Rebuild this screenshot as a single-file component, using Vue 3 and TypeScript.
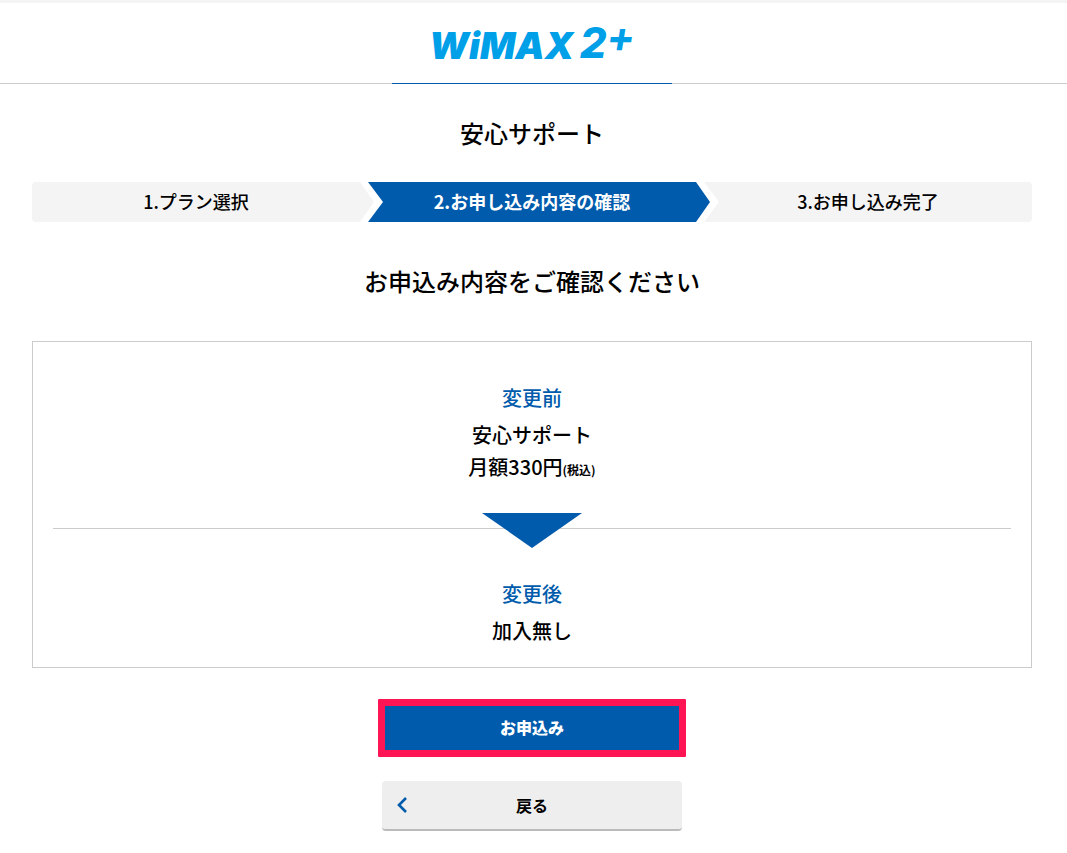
<script setup lang="ts">
interface Step {
  id: number
  label: string
}

const steps: Step[] = [
  { id: 1, label: '1.プラン選択' },
  { id: 2, label: '2.お申し込み内容の確認' },
  { id: 3, label: '3.お申し込み完了' },
]
const currentStep = 2
</script>

<template>
  <div class="page">
    <header class="header">
      <div class="brand" aria-label="WiMAX 2+">
        <span class="brand-name">WiMAX</span>
        <span class="brand-two">2</span>
        <span class="brand-plus">+</span>
      </div>
    </header>

    <main class="main">
      <h1 class="title">安心サポート</h1>

      <ol class="steps">
        <li
          v-for="step in steps"
          :key="step.id"
          class="step"
          :class="{ current: step.id === currentStep }"
          :aria-current="step.id === currentStep ? 'step' : undefined"
        >
          <span class="step-label">{{ step.label }}</span>
        </li>
      </ol>

      <h2 class="title subtitle">お申込み内容をご確認ください</h2>

      <section class="panel">
        <h3 class="label">変更前</h3>
        <p class="value">安心サポート</p>
        <p class="value">月額330円<small class="tax">(税込)</small></p>
        <div class="divider">
          <svg class="arrow" width="100" height="35" viewBox="0 0 100 35" aria-hidden="true">
            <path d="M0 0H100L50 35Z" fill="#005bac" />
          </svg>
        </div>
        <h3 class="label">変更後</h3>
        <p class="value">加入無し</p>
      </section>

      <div class="actions">
        <button type="button" class="apply">お申込み</button>
        <button type="button" class="back">
          <svg class="chevron" width="10" height="16" viewBox="0 0 10 16" aria-hidden="true">
            <path d="M9 1L2 8L9 15" fill="none" stroke="#005bac" stroke-width="2.6" />
          </svg>
          戻る
        </button>
      </div>
    </main>
  </div>
</template>

<style>
body {
  margin: 0;
  background: #fff;
}
</style>

<style scoped>
.page {
  font-family: "Noto Sans CJK JP", sans-serif;
  font-weight: 500;
  color: #000;
  border-top: 3px solid #f4f4f4;
}

.header {
  display: flex;
  justify-content: center;
  height: 80px;
  padding-right: 3px;
  border-bottom: 1px solid #ccc;
}

.brand {
  display: flex;
  justify-content: center;
  box-sizing: border-box;
  width: 280px;
  height: 81px;
  border-bottom: 1px solid #005bac;
  color: #00a0e9;
  font-family: Inter, "Liberation Sans", sans-serif;
  font-style: italic;
  font-weight: 900;
  white-space: nowrap;
}

.brand-name {
  font-size: 37px;
  line-height: 86px;
}

.brand-two {
  margin-left: 6px;
  font-size: 42px;
  font-weight: 800;
  line-height: 80px;
}

.brand-plus {
  font-size: 42px;
  font-weight: 700;
  line-height: 68px;
}

.main {
  max-width: 1000px;
  margin: 0 auto;
  padding: 32px 35px 22px 32px;
}

.title {
  margin: 0;
  font-size: 24px;
  font-weight: 500;
  line-height: 34px;
  text-align: center;
}

.steps {
  display: grid;
  grid-template-columns: repeat(3, 1fr);
  gap: 8px;
  margin: 32px 0 42px;
  padding: 0;
  list-style: none;
}

.step {
  position: relative;
  height: 40px;
  font-size: 18px;
  line-height: 38px;
  text-align: center;
}

.step::before {
  content: "";
  position: absolute;
  inset: 0 -14px 0 0;
  background: #f4f4f4;
  clip-path: polygon(0 0, calc(100% - 14px) 0, 100% 50%, calc(100% - 14px) 100%, 0 100%, 15px 50%);
}

.step:first-child::before {
  border-radius: 4px 0 0 4px;
  clip-path: polygon(0 0, calc(100% - 14px) 0, 100% 50%, calc(100% - 14px) 100%, 0 100%);
}

.step:last-child::before {
  right: 0;
  border-radius: 0 4px 4px 0;
  clip-path: polygon(0 0, 100% 0, 100% 100%, 0 100%, 15px 50%);
}

.step.current {
  color: #fff;
  font-weight: 700;
}

.step.current::before {
  background: #005bac;
}

.step-label {
  position: relative;
}

.subtitle {
  margin-bottom: 43px;
}

.panel {
  padding: 41px 20px 20px;
  border: 1px solid #ccc;
  text-align: center;
}

.label {
  margin: 0 0 6px;
  color: #005bac;
  font-size: 20px;
  font-weight: 500;
  line-height: 30px;
}

.value {
  margin: 0;
  font-size: 20px;
  line-height: 32px;
}

.tax {
  font-size: 12px;
  font-weight: 700;
  line-height: 1;
}

.divider {
  display: flex;
  justify-content: center;
  margin: 30px 0 31px;
  background: linear-gradient(#ccc, #ccc) 0 15px / 100% 1px no-repeat;
}

.arrow {
  display: block;
}

.actions {
  display: flex;
  flex-direction: column;
  align-items: center;
  gap: 24px;
  margin-top: 31px;
}

.apply,
.back {
  box-sizing: border-box;
  padding: 0;
  font-family: inherit;
  font-size: 16px;
  font-weight: 700;
  cursor: pointer;
}

.apply {
  width: 308px;
  height: 58px;
  padding-bottom: 2px;
  border: 7px solid #ff1454;
  border-radius: 1px;
  background: #005bac;
  color: #fff;
  font-weight: 900;
}

.back {
  position: relative;
  width: 300px;
  height: 50px;
  border: 0;
  border-bottom: 2px solid #bbb;
  border-radius: 4px;
  background: #eee;
  color: #000;
}

.chevron {
  position: absolute;
  top: 16px;
  left: 15px;
}
</style>
